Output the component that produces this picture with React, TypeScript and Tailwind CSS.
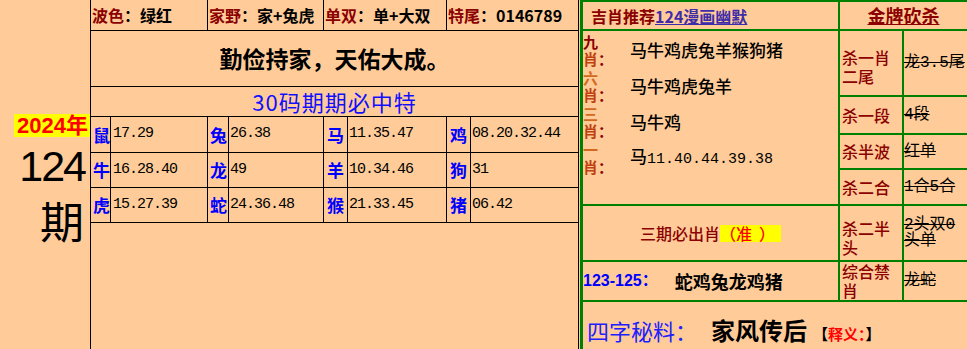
const topCells = [
  ["波色", "绿红"],
  ["家野", "家+兔虎"],
  ["单双", "单+大双"],
  ["特尾", "0146789"],
];

const animals = [
  [["鼠", "17.29"], ["兔", "26.38"], ["马", "11.35.47"], ["鸡", "08.20.32.44"]],
  [["牛", "16.28.40"], ["龙", "49"], ["羊", "10.34.46"], ["狗", "31"]],
  [["虎", "15.27.39"], ["蛇", "24.36.48"], ["猴", "21.33.45"], ["猪", "06.42"]],
];
const animalRowH = ["h-[36px]", "h-[35px]", "h-[35px]"];
const labelPad = ["pl-[2px]", "pl-[2px]", "pl-[3px]", "pl-[3px]"];
const numPad = ["pl-[2px]", "pl-[1px]", "pl-[1px]", "pl-[1px]"];

const shi = [
  { n: "九", nc: "text-[#8b0000]", v: "马牛鸡虎兔羊猴狗猪", d: "", h: "h-[37px]" },
  { n: "六", nc: "text-[#d2691e]", v: "马牛鸡虎兔羊", d: "", h: "h-[36px]" },
  { n: "三", nc: "text-[#d2691e]", v: "马牛鸡", d: "", h: "h-[35px]" },
  { n: "一", nc: "text-[#d2691e]", v: "马", d: "11.40.44.39.38", h: "h-[37px]" },
];

function KillLabel({ text, extra = "" }: { text: string; extra?: string }) {
  return (
    <div className={`flex items-center bg-[#ffcc99] pl-[2px] text-[16px] font-medium leading-[19px] text-[#8b0000] ${extra}`}>
      <span>{text}</span>
    </div>
  );
}

function KillValue({ text }: { text: string }) {
  return (
    <div className="flex items-center bg-[#ffcc99] font-['Liberation_Mono','Noto_Sans_CJK_SC',monospace] text-[16px] leading-[16px] line-through">
      <span>{text}</span>
    </div>
  );
}

export default function App() {
  return (
    <div className="flex h-[349px] w-[967px] overflow-hidden bg-[#ffcc99] font-['Noto_Sans_CJK_SC',sans-serif] text-black">
      {/* issue */}
      <div className="flex w-[90px] shrink-0 flex-col items-end pt-[114px]">
        <div className="h-[23px] bg-[#ffff00] pl-[3px] pr-[2px] font-['Liberation_Sans','Noto_Sans_CJK_SC',sans-serif] text-[22px] font-bold leading-[23px] text-[#ff0000]">
          2024年
        </div>
        <div className="mt-[7px] pr-[5px] font-['Liberation_Sans',sans-serif] text-[43px] leading-[44px] tracking-[-2px]">
          124
        </div>
        <div className="mt-[10px] pr-[6px] text-[44px] leading-[44px]">期</div>
      </div>

      {/* middle table */}
      <div className="flex w-[489px] shrink-0 flex-col border-x border-black">
        <div className="grid h-[31px] grid-cols-[116px_115px_122px_1fr] gap-px border-b border-black bg-black">
          {topCells.map(([k, v]) => (
            <div key={k} className="flex items-center bg-[#ffcc99] pl-[1px] text-[16px] font-bold whitespace-nowrap">
              <span className="text-[#8b0000]">{k}</span>
              <span>：{v}</span>
            </div>
          ))}
        </div>
        <div className="flex h-[56px] items-center justify-center border-b border-black text-[23px] font-bold">
          勤俭持家，天佑大成。
        </div>
        <div className="flex h-[30px] items-center justify-center border-b border-black text-[22px] tracking-[1px] text-[#1010ff]">
          30码期期必中特
        </div>
        {animals.map((row, i) => (
          <div
            key={i}
            className={`grid grid-cols-[19px_96px_20px_94px_23px_98px_23px_1fr] gap-px border-b border-black bg-black ${animalRowH[i]}`}
          >
            {row.map(([a, n], j) => [
              <div key={a} className={`flex items-center bg-[#ffcc99] text-[17px] font-bold text-[#0000ff] ${labelPad[j]}`}>
                {a}
              </div>,
              <div
                key={a + "n"}
                className={`flex items-center bg-[#ffcc99] font-['Liberation_Mono',monospace] text-[15px] tracking-[-1px] ${numPad[j]}`}
              >
                {n}
              </div>,
            ])}
          </div>
        ))}
        <div className="flex-1" />
      </div>

      {/* right panel */}
      <div className="ml-px grid flex-1 grid-cols-[255px_62px_1fr] grid-rows-[27px_64px_36px_33px_34px_54px_38px_1fr] gap-[2px] bg-[#008000] pl-[3px] pt-[2px]">
        <div className="flex items-center bg-[#ffcc99] pl-[8px] text-[16px] font-bold">
          <span className="text-[#8b0000]">吉肖推荐</span>
          <span className="text-[#3f2ca8] underline">124漫画幽默</span>
        </div>
        <div className="col-span-2 flex items-center justify-center bg-[#ffcc99] text-[18px] font-bold text-[#8b0000] underline">
          金牌砍杀
        </div>

        <div className="row-span-4 flex flex-col bg-[#ffcc99]">
          {shi.map((s) => (
            <div key={s.n} className={`flex items-center ${s.h}`}>
              <div className="w-[47px] shrink-0 text-[15px] font-bold leading-[17px]">
                <span className={s.nc}>{s.n}</span>
                <br />
                <span className="text-[#c04010]">肖</span>
                <span className="text-[#8b0000]">：</span>
              </div>
              <div className="text-[17px] font-medium whitespace-nowrap">
                {s.v}
                {s.d && <span className="font-['Liberation_Mono',monospace] text-[15px]">{s.d}</span>}
              </div>
            </div>
          ))}
        </div>
        <KillLabel text="杀一肖二尾" extra="pt-[8px]" />
        <KillValue text="龙3.5尾" />
        <KillLabel text="杀一段" />
        <KillValue text="4段" />
        <KillLabel text="杀半波" />
        <KillValue text="红单" />
        <KillLabel text="杀二合" />
        <KillValue text="1合5合" />

        <div className="flex items-center justify-center bg-[#ffcc99] text-[16px] font-medium">
          <span className="text-[#8b0000]">三期必出肖</span>
          <span className="bg-[#ffff00] pr-[6px] leading-[17px] text-[#ff0000]">（准&nbsp;&nbsp;）</span>
        </div>
        <KillLabel text="杀二半头" extra="pt-[10px]" />
        <KillValue text="2头双0头单" />

        <div className="flex items-center bg-[#ffcc99]">
          <span className="font-['Liberation_Sans','Noto_Sans_CJK_SC',sans-serif] text-[16px] font-bold text-[#0000ff]">
            123-125：
          </span>
          <span className="ml-[17px] text-[18px] font-bold">蛇鸡兔龙鸡猪</span>
        </div>
        <KillLabel text="综合禁肖" />
        <KillValue text="龙蛇" />

        <div className="col-span-3 flex items-baseline bg-[#ffcc99] pl-[4px] pt-[15px] leading-[26px]">
          <span className="text-[22px] text-[#2020ff]">四字秘料：</span>
          <span className="ml-[14px] text-[24px] font-bold">家风传后</span>
          <span className="ml-[6px] text-[15px] font-bold">
            【<span className="text-[#ff0000]">释义：</span>】
          </span>
        </div>
      </div>
    </div>
  );
}
